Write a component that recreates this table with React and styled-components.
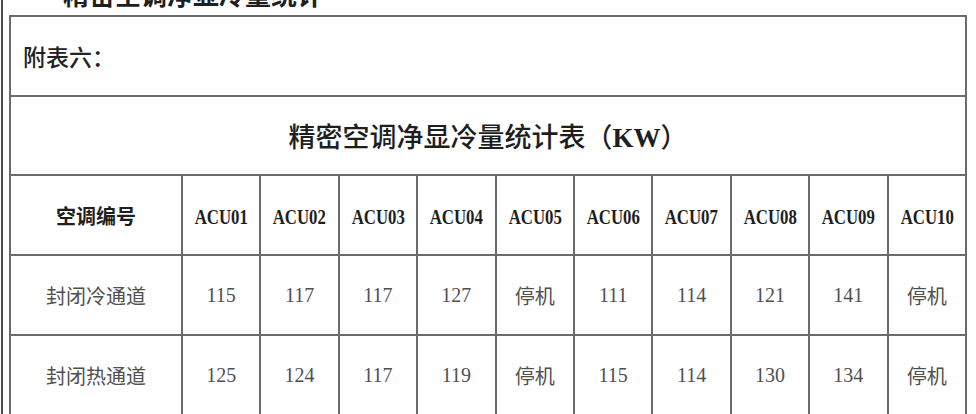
import React from 'react';
import styled, { createGlobalStyle } from 'styled-components';

const GlobalStyle = createGlobalStyle`
html, body {
  margin:0;
  padding:0;
  background:#fff;
}
body {
  font-family:"Noto Sans CJK SC", "Liberation Sans", sans-serif;
  overflow:hidden;
}`;

const Page = styled.div`
width:976px;
height:414px;
overflow:hidden;
border-left:2px solid #4a4a4a;
margin-left:1px;
box-sizing:border-box;`;

const Heading = styled.div`
height:15px;
overflow:hidden;
display:flex;
align-items:flex-end;
padding-left:60px;`;

const HeadingText = styled.span`
font-size:26px;
font-weight:700;
line-height:26px;
color:#1e1e1e;
margin-bottom:8px;`;

const Sheet = styled.table`
border-collapse:collapse;
table-layout:fixed;
width:958px;
margin-left:6px;`;

const Cell = styled.td`
border:2px solid #6b6b6b;
height:${props => props.h || 76}px;
padding:0;
text-align:${props => props.left ? 'left' : 'center'};
vertical-align:middle;
color:${props => props.dim ? '#505050' : '#1e1e1e'};
font-size:${props => props.size || 20}px;
font-weight:${props => props.bold ? 700 : 400};
font-family:${props => props.serif ? '"Liberation Serif", "Noto Sans CJK SC", serif' : '"Noto Sans CJK SC", sans-serif'};`;

const Caption = styled.span`
padding-left:12px;
font-size:23px;
font-weight:500;
color:#222;`;

const Title = styled.span`
font-size:27px;
font-weight:500;
color:#1e1e1e;`;

const Unit = styled.span`
font-family:"Liberation Serif", serif;
font-weight:700;`;

const ACU = styled.span`
display:inline-block;
font-family:"Liberation Serif", serif;
font-weight:700;
font-size:21px;
transform:scaleX(0.8);
color:#1e1e1e;`;

const units = ['ACU01', 'ACU02', 'ACU03', 'ACU04', 'ACU05', 'ACU06', 'ACU07', 'ACU08', 'ACU09', 'ACU10'];

const rows = [
  { name: '封闭冷通道', values: ['115', '117', '117', '127', '停机', '111', '114', '121', '141', '停机'] },
  { name: '封闭热通道', values: ['125', '124', '117', '119', '停机', '115', '114', '130', '134', '停机'] }
];

const App = () => {
  return (
    <>
      <GlobalStyle />
      <Page>
        <Heading>
          <HeadingText>精密空调净显冷量统计</HeadingText>
        </Heading>
        <Sheet>
          <colgroup>
            <col style={{ width: '172px' }} />
            {units.map(u => <col key={u} />)}
          </colgroup>
          <tbody>
            <tr>
              <Cell colSpan={11} left h={78}>
                <Caption>附表六：</Caption>
              </Cell>
            </tr>
            <tr>
              <Cell colSpan={11} h={77}>
                <Title>精密空调净显冷量统计表（<Unit>KW</Unit>）</Title>
              </Cell>
            </tr>
            <tr>
              <Cell bold size={20} h={78}>空调编号</Cell>
              {units.map(u => (
                <Cell key={u} h={78}><ACU>{u}</ACU></Cell>
              ))}
            </tr>
            {rows.map(row => (
              <tr key={row.name}>
                <Cell dim h={78}>{row.name}</Cell>
                {row.values.map((v, i) => (
                  <Cell key={i} dim h={78} serif={v !== '停机'}>{v}</Cell>
                ))}
              </tr>
            ))}
          </tbody>
        </Sheet>
      </Page>
    </>
  );
};

export default App;
